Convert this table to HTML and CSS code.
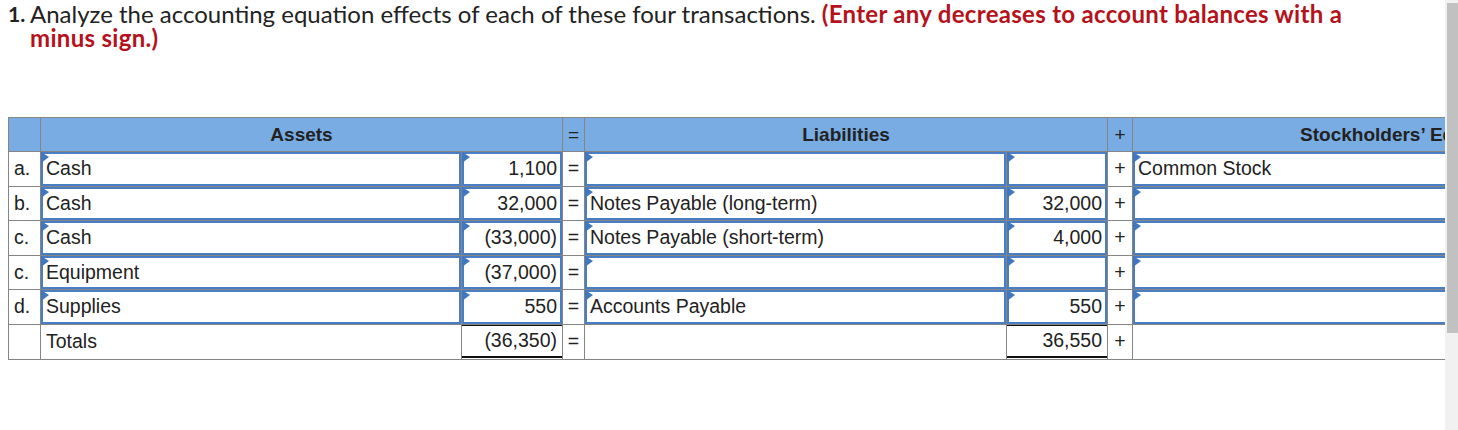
FILE: index.html
```html
<!DOCTYPE html>
<html lang="en">
<head>
<meta charset="utf-8">
<title>Accounting equation</title>
<link rel="stylesheet" href="styles.css">
</head>
<body>
<div class="page">
  <main class="main">
    <div class="q">
      <span class="qnum">1.</span>
      <p class="qtext">Analyze the accounting equation effects of each of these four transactions. <strong class="hint">(Enter any decreases to account balances with a minus sign.)</strong></p>
    </div>
    <table class="eq">
      <colgroup>
        <col class="c-lbl"><col class="c-name"><col class="c-amt"><col class="c-eq"><col class="c-name2"><col class="c-amt"><col class="c-plus"><col class="c-name2"><col class="c-amt">
      </colgroup>
      <thead>
        <tr><th></th><th colspan="2">Assets</th><th class="op">=</th><th colspan="2">Liabilities</th><th class="op">+</th><th colspan="2">Stockholders’ Equity</th></tr>
      </thead>
      <tbody>
        <tr>
          <td class="lbl">a.</td>
          <td><div class="inp">Cash</div></td>
          <td><div class="inp num">1,100</div></td>
          <td class="op">=</td>
          <td><div class="inp"></div></td>
          <td><div class="inp num"></div></td>
          <td class="op">+</td>
          <td><div class="inp">Common Stock</div></td>
          <td><div class="inp num"></div></td>
        </tr>
        <tr>
          <td class="lbl">b.</td>
          <td><div class="inp">Cash</div></td>
          <td><div class="inp num">32,000</div></td>
          <td class="op">=</td>
          <td><div class="inp">Notes Payable (long-term)</div></td>
          <td><div class="inp num">32,000</div></td>
          <td class="op">+</td>
          <td><div class="inp"></div></td>
          <td><div class="inp num"></div></td>
        </tr>
        <tr>
          <td class="lbl">c.</td>
          <td><div class="inp">Cash</div></td>
          <td><div class="inp num">(33,000)</div></td>
          <td class="op">=</td>
          <td><div class="inp">Notes Payable (short-term)</div></td>
          <td><div class="inp num">4,000</div></td>
          <td class="op">+</td>
          <td><div class="inp"></div></td>
          <td><div class="inp num"></div></td>
        </tr>
        <tr>
          <td class="lbl">c.</td>
          <td><div class="inp">Equipment</div></td>
          <td><div class="inp num">(37,000)</div></td>
          <td class="op">=</td>
          <td><div class="inp"></div></td>
          <td><div class="inp num"></div></td>
          <td class="op">+</td>
          <td><div class="inp"></div></td>
          <td><div class="inp num"></div></td>
        </tr>
        <tr>
          <td class="lbl">d.</td>
          <td><div class="inp">Supplies</div></td>
          <td><div class="inp num">550</div></td>
          <td class="op">=</td>
          <td><div class="inp">Accounts Payable</div></td>
          <td><div class="inp num">550</div></td>
          <td class="op">+</td>
          <td><div class="inp"></div></td>
          <td><div class="inp num"></div></td>
        </tr>
        <tr class="totals">
          <td class="lbl"></td>
          <td><div class="plain">Totals</div></td>
          <td><div class="tot">(36,350)</div></td>
          <td class="op">=</td>
          <td><div class="plain"></div></td>
          <td><div class="tot">36,550</div></td>
          <td class="op">+</td>
          <td><div class="plain"></div></td>
          <td><div class="tot"></div></td>
        </tr>
      </tbody>
    </table>
  </main>
  <div class="scroll"><div class="thumb"></div></div>
</div>
</body>
</html>
```

FILE: styles.css
```css
html, body {
  margin: 0;
  padding: 0;
  background: #ffffff;
}
body {
  font-family: "Liberation Sans", Arial, sans-serif;
  color: #222222;
}
.page {
  display: flex;
  height: 430px;
  overflow: hidden;
}
.main {
  flex: 0 0 1445px;
  width: 1445px;
  overflow: hidden;
  padding-left: 8px;
  box-sizing: border-box;
}
.scroll {
  flex: 0 0 13px;
  background: #f1f1f1;
  padding: 3px 0 0 2px;
  box-sizing: border-box;
}
.thumb {
  height: 330px;
  background: #c1c1c1;
}
.q {
  display: flex;
  font-family: Lato, "Open Sans", sans-serif;
  font-size: 24px;
  line-height: 24.5px;
  padding-top: 1.5px;
  color: #222222;
}
.qnum {
  flex: none;
  width: 22px;
  font-size: 21px;
  font-weight: 700;
}
.qtext {
  margin: 0;
  width: 1345px;
}
.hint {
  color: #b5121b;
  font-weight: 700;
  letter-spacing: 0.3px;
}
.eq {
  margin-top: 66.5px;
  border-collapse: collapse;
  table-layout: fixed;
  width: 1647px;
  font-size: 19.5px;
  color: #222222;
}
.c-lbl { width: 32px; }
.c-name { width: 421px; }
.c-amt { width: 101px; }
.c-eq { width: 22px; }
.c-name2 { width: 422px; }
.c-plus { width: 25px; }
.eq th, .eq td {
  border: 1px solid #858585;
  padding: 0;
}
.eq thead tr {
  height: 34px;
}
.eq th {
  background: #78ace3;
  font-weight: 700;
  font-size: 19px;
  text-align: center;
  color: #222222;
}
.eq tbody tr {
  height: 34.5px;
}
.eq .op {
  text-align: center;
  font-weight: 400;
}
.eq .lbl {
  padding-left: 5px;
}
.inp {
  position: relative;
  box-sizing: border-box;
  height: 33.5px;
  border: 2px solid #4a7ec4;
  background: #ffffff;
  display: flex;
  align-items: center;
  padding: 0 3px;
  white-space: nowrap;
}
.inp::before {
  content: "";
  position: absolute;
  left: -2px;
  top: -2px;
  width: 0;
  height: 0;
  border-top: 5px solid transparent;
  border-bottom: 6px solid transparent;
  border-left: 8px solid #3f77c0;
}
.num {
  justify-content: flex-end;
}
.plain {
  height: 33.5px;
  display: flex;
  align-items: center;
  padding: 0 5px;
}
.tot {
  box-sizing: border-box;
  height: 33.5px;
  margin: 0 0 1px;
  border-top: 1px solid #111111;
  border-bottom: 2px solid #111111;
  display: flex;
  align-items: center;
  justify-content: flex-end;
  padding: 0 5px;
}
```
